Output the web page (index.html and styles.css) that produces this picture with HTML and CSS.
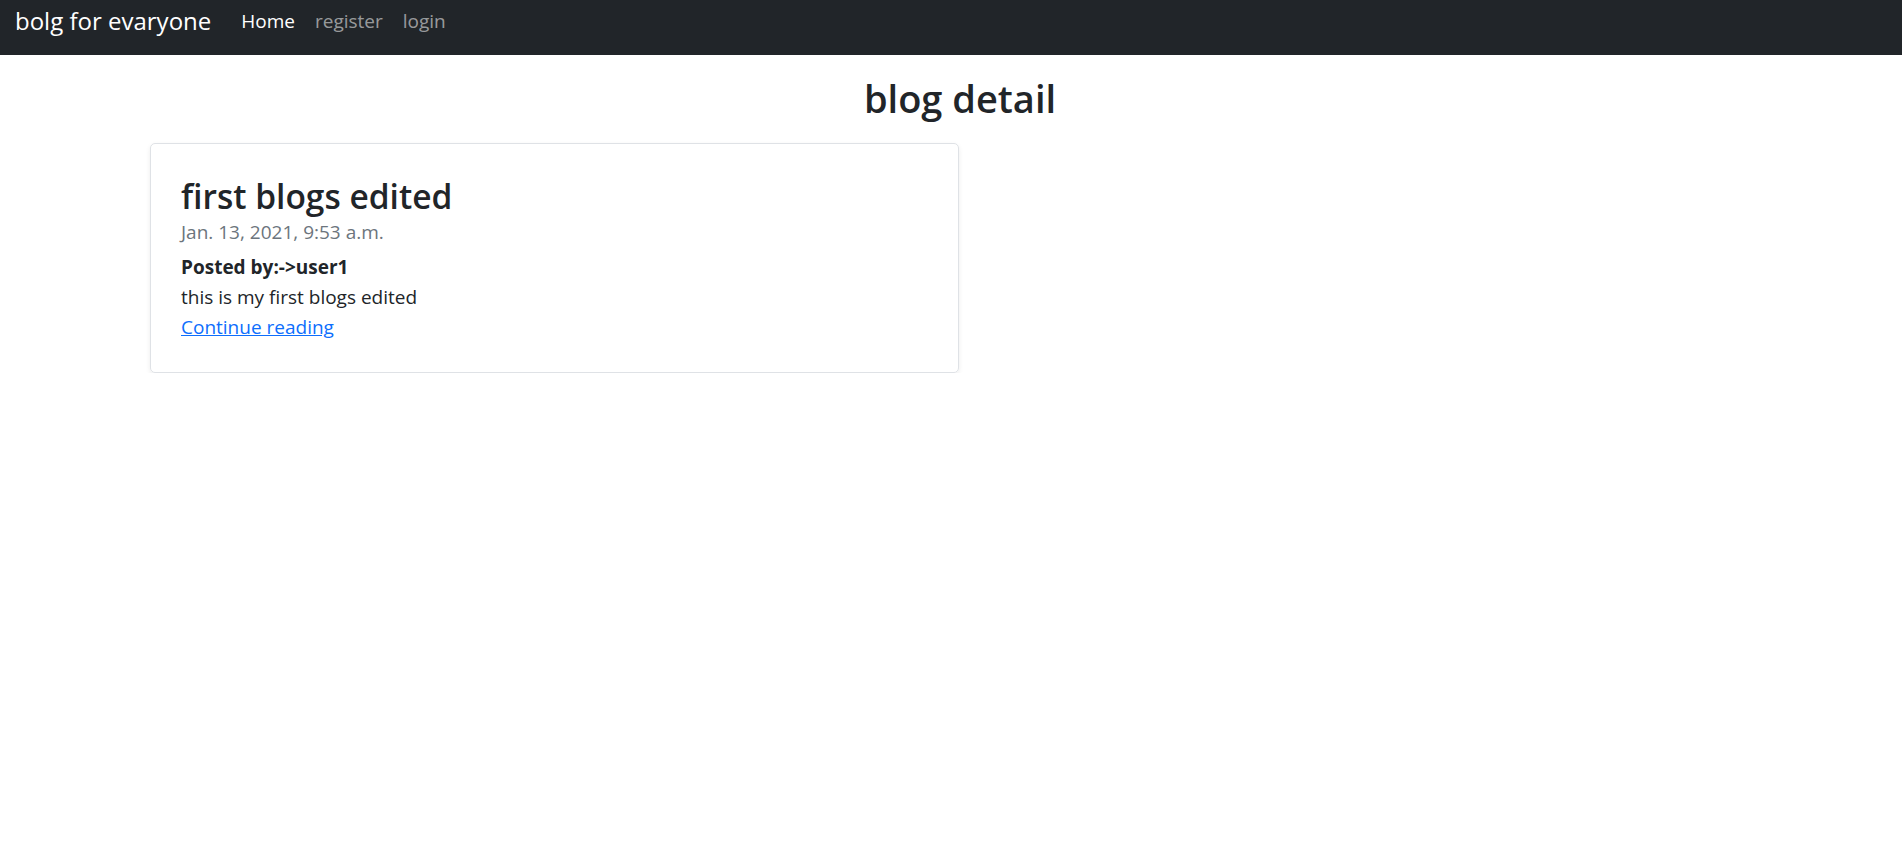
FILE: index.html
```html
<!DOCTYPE html>
<html lang="en">
<head>
<meta charset="utf-8">
<title>blog detail</title>
<link rel="stylesheet" href="styles.css">
</head>
<body>
<nav class="navbar">
  <a class="brand" href="#">bolg for evaryone</a>
  <ul class="nav">
    <li><a class="nav-link active" href="#">Home</a></li>
    <li><a class="nav-link" href="#">register</a></li>
    <li><a class="nav-link" href="#">login</a></li>
  </ul>
</nav>
<main class="page">
  <h1 class="page-title">blog detail</h1>
  <div class="card">
    <h3 class="card-title">first blogs edited</h3>
    <div class="card-date">Jan. 13, 2021, 9:53 a.m.</div>
    <div class="card-author">Posted by:-&gt;user1</div>
    <div class="card-text">this is my first blogs edited</div>
    <a class="card-link" href="#">Continue reading</a>
  </div>
</main>
</body>
</html>
```
FILE: styles.css
```css
html, body {
  margin: 0;
  padding: 0;
}
body {
  font-family: "Open Sans", "Noto Sans", sans-serif;
  font-size: 20px;
  line-height: 30px;
  color: #212529;
  background: #fff;
}
.navbar {
  display: flex;
  align-items: flex-start;
  height: 55px;
  box-sizing: border-box;
  padding: 0 15px;
  background: #212529;
}
.brand {
  font-size: 24px;
  line-height: 30px;
  padding-top: 6px;
  margin-right: 20px;
  color: #fff;
  text-decoration: none;
}
.nav {
  display: flex;
  list-style: none;
  margin: 0;
  padding: 6px 0 0;
}
.nav-link {
  display: block;
  padding: 0 10px;
  font-size: 19px;
  line-height: 30px;
  color: rgba(255, 255, 255, 0.55);
  text-decoration: none;
}
.nav-link.active {
  color: #fff;
}
.page {
  display: flex;
  flex-direction: column;
  align-items: flex-start;
}
.page-title {
  align-self: stretch;
  margin: 19px 0 21px;
  padding-left: 18px;
  text-align: center;
  font-size: 38px;
  line-height: 48px;
  font-weight: 600;
}
.card {
  margin-left: 150px;
  width: 809px;
  box-sizing: border-box;
  border: 1px solid #dfe2e6;
  border-radius: 5px;
  box-shadow: 0 2px 5px rgba(0, 0, 0, 0.075);
  padding: 30px;
  display: flex;
  flex-direction: column;
  align-items: flex-start;
}
.card-title {
  margin: 0;
  font-size: 33.5px;
  line-height: 42px;
  font-weight: 600;
  padding-top: 1px;
}
.card-date {
  color: #6c757d;
  font-size: 19px;
  margin-bottom: 5px;
}
.card-author {
  font-weight: 700;
  font-size: 19px;
}
.card-text {
  font-size: 19px;
}
.card-link {
  font-size: 19px;
  color: #0d6efd;
  text-decoration: underline;
}
```
